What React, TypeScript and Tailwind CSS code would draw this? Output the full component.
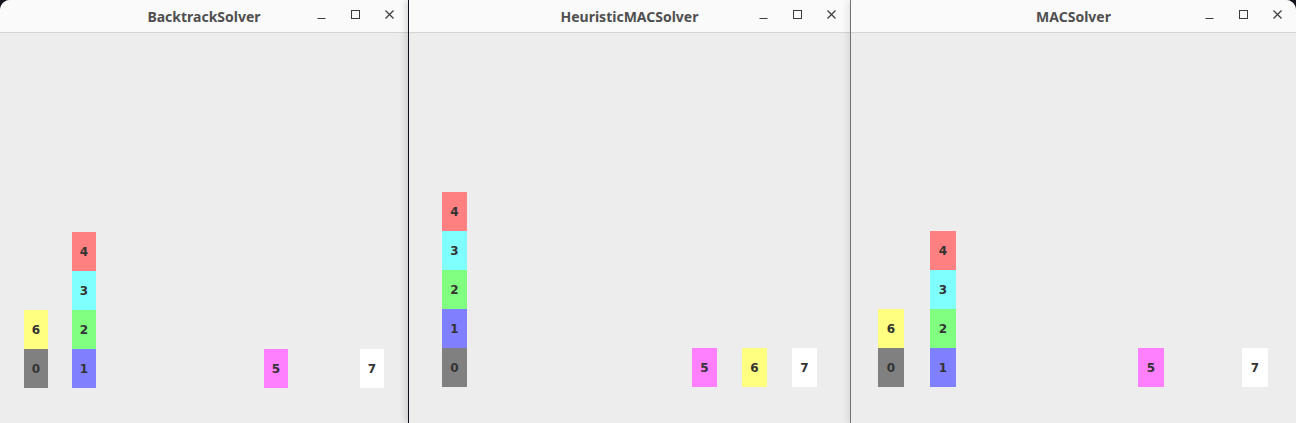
import type { ReactNode } from "react";

const COLORS: Record<number, string> = {
  0: "bg-[#808080]",
  1: "bg-[#8080ff]",
  2: "bg-[#80ff80]",
  3: "bg-[#80ffff]",
  4: "bg-[#ff8080]",
  5: "bg-[#ff80ff]",
  6: "bg-[#ffff80]",
  7: "bg-[#ffffff]",
};

type Solver = {
  title: string;
  width: string;
  pad: string;
  gap: string;
  col: string;
  columns: number[][];
};

const SOLVERS: Solver[] = [
  {
    title: "BacktrackSolver",
    width: "w-[408px] rounded-tl-[10px]",
    pad: "pl-[24px] pb-[35px]",
    gap: "gap-[24px]",
    col: "w-[24px]",
    columns: [[0, 6], [1, 2, 3, 4], [], [], [], [5], [], [7]],
  },
  {
    title: "HeuristicMACSolver",
    width: "w-[441px] shadow-[-4px_0_6px_rgba(0,0,0,0.12)]",
    pad: "pl-[33px] pb-[36px]",
    gap: "gap-[25px]",
    col: "w-[25px]",
    columns: [[0, 1, 2, 3, 4], [], [], [], [], [5], [6], [7]],
  },
  {
    title: "MACSolver",
    width: "w-[445px] rounded-tr-[10px] shadow-[-4px_0_6px_rgba(0,0,0,0.08)]",
    pad: "pl-[27px] pb-[36px]",
    gap: "gap-[26px]",
    col: "w-[26px]",
    columns: [[0, 6], [1, 2, 3, 4], [], [], [], [5], [], [7]],
  },
];

function Ctl({ children }: { children: ReactNode }) {
  return (
    <svg width="16" height="16" viewBox="0 0 16 16" className="text-[#3c3c3c]">
      {children}
    </svg>
  );
}

function Window({ s }: { s: Solver }) {
  return (
    <div className={`${s.width} relative flex h-full shrink-0 flex-col overflow-hidden bg-[#ededed]`}>
      {/* title bar */}
      <div className="relative flex h-[33px] shrink-0 items-center justify-center border-b border-[#d5d5d5] bg-[#fafafa]">
        <span className="pt-[1px] font-['Noto_Sans',sans-serif] text-[14px] font-bold text-[#4f4f4f]">
          {s.title}
        </span>
        <div className="absolute right-[10px] top-[7px] flex gap-[18px]">
          <Ctl>
            <path d="M3.5 11.5h8" stroke="currentColor" strokeWidth="1" />
          </Ctl>
          <Ctl>
            <rect x="3.5" y="3.5" width="8" height="8" fill="none" stroke="currentColor" strokeWidth="1" />
          </Ctl>
          <Ctl>
            <path d="M3.5 3.5l8 8M11.5 3.5l-8 8" stroke="currentColor" strokeWidth="1.2" />
          </Ctl>
        </div>
      </div>
      {/* board */}
      <div className={`flex flex-1 items-end ${s.pad} ${s.gap}`}>
        {s.columns.map((stack, i) => (
          <div key={i} className={`flex flex-col-reverse ${s.col}`}>
            {stack.map((n) => (
              <div
                key={n}
                className={`flex h-[39px] items-center justify-center ${COLORS[n]} font-['DejaVu_Sans',sans-serif] text-[12px] font-bold text-[#333]`}
              >
                {n}
              </div>
            ))}
          </div>
        ))}
      </div>
    </div>
  );
}

export default function App() {
  return (
    <div className="flex h-[423px] w-[1296px] overflow-hidden bg-[#15151c]">
      <Window s={SOLVERS[0]} />
      <div className="w-[1px] shrink-0 bg-[#10101a]" />
      <Window s={SOLVERS[1]} />
      <div className="w-[1px] shrink-0 bg-[#7a7a7a]" />
      <Window s={SOLVERS[2]} />
    </div>
  );
}
